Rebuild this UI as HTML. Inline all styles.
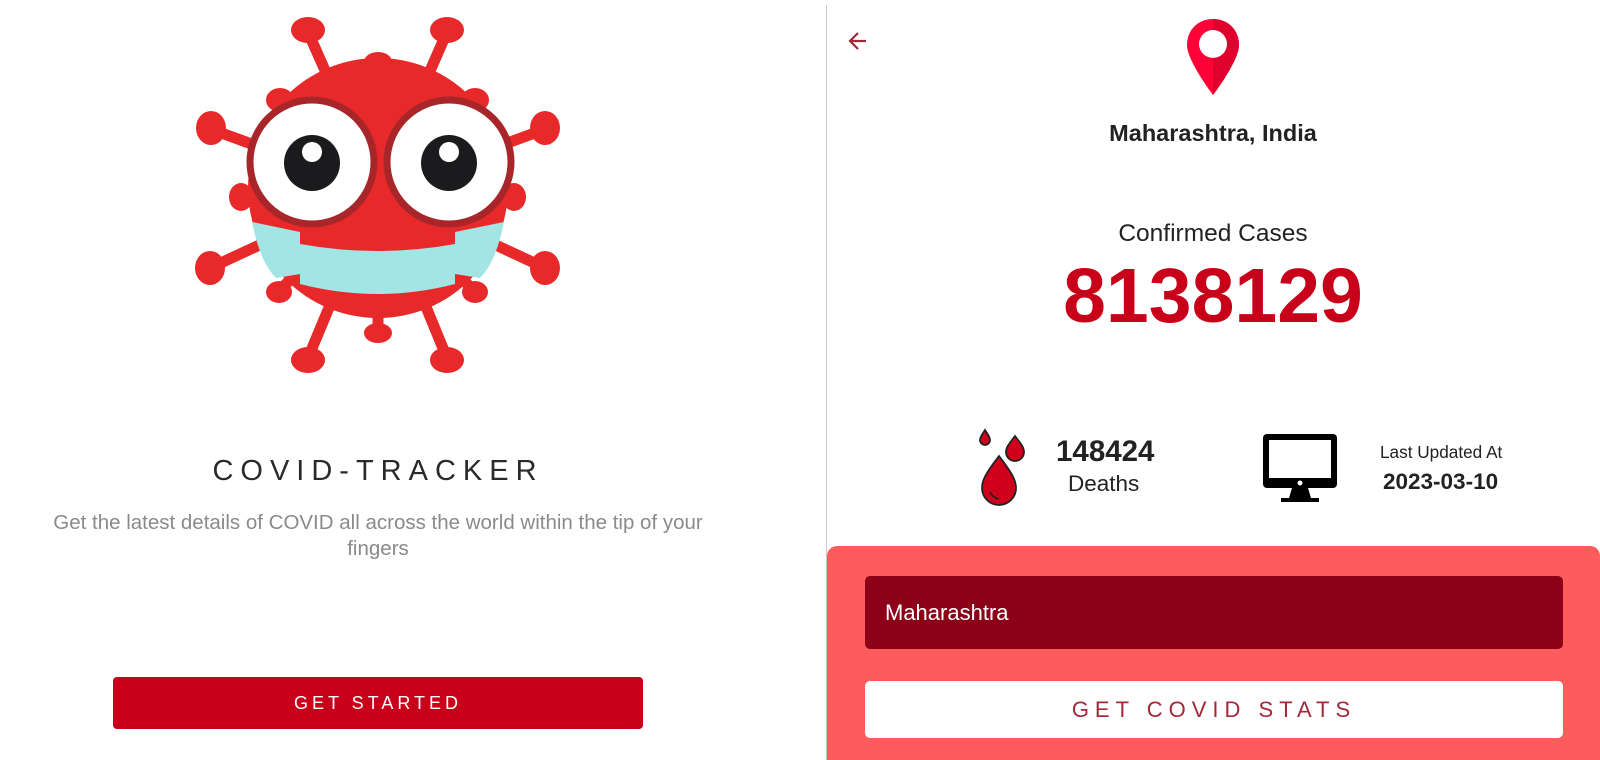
<!DOCTYPE html>
<html><head><meta charset="utf-8"><style>
*{margin:0;padding:0;box-sizing:border-box}
body{width:1600px;height:760px;background:#fff;position:relative;overflow:hidden;font-family:"Liberation Sans",sans-serif}
.a{position:absolute}
.c{text-align:center}
</style></head><body>
<svg class="a" style="left:0;top:0" width="800" height="420" viewBox="0 0 800 420">
<g stroke="#e8292a" stroke-width="11" stroke-linecap="round">
<line x1="378" y1="190" x2="308" y2="32"/><line x1="378" y1="190" x2="447" y2="32"/>
<line x1="378" y1="190" x2="378" y2="62"/><line x1="378" y1="190" x2="213" y2="130"/>
<line x1="378" y1="190" x2="543" y2="130"/><line x1="378" y1="190" x2="243" y2="197"/>
<line x1="378" y1="190" x2="512" y2="197"/><line x1="378" y1="190" x2="212" y2="267"/>
<line x1="378" y1="190" x2="543" y2="267"/><line x1="378" y1="190" x2="280" y2="290"/>
<line x1="378" y1="190" x2="473" y2="290"/><line x1="378" y1="190" x2="308" y2="358"/>
<line x1="378" y1="190" x2="447" y2="358"/><line x1="378" y1="190" x2="378" y2="330"/>
<line x1="378" y1="190" x2="280" y2="102"/><line x1="378" y1="190" x2="473" y2="102"/>
</g>
<g fill="#e8292a">
<ellipse cx="308" cy="30" rx="17" ry="13"/><ellipse cx="447" cy="30" rx="17" ry="13"/>
<ellipse cx="378" cy="62" rx="14" ry="10"/><ellipse cx="211" cy="128" rx="15" ry="17"/>
<ellipse cx="545" cy="128" rx="15" ry="17"/><ellipse cx="241" cy="197" rx="12" ry="14"/>
<ellipse cx="514" cy="197" rx="12" ry="14"/><ellipse cx="210" cy="268" rx="15" ry="17"/>
<ellipse cx="545" cy="268" rx="15" ry="17"/><ellipse cx="279" cy="292" rx="13" ry="11"/>
<ellipse cx="475" cy="292" rx="13" ry="11"/><ellipse cx="308" cy="360" rx="17" ry="13"/>
<ellipse cx="447" cy="360" rx="17" ry="13"/><ellipse cx="378" cy="333" rx="14" ry="10"/>
<ellipse cx="280" cy="100" rx="14" ry="12"/><ellipse cx="475" cy="100" rx="14" ry="12"/>
<circle cx="378" cy="188" r="130"/>
</g>
<path d="M252 222 L300 232 L300 244 Q378 258 455 244 L455 232 L504 222 Q496 262 480 278 L455 274 L455 284 Q378 304 300 284 L300 274 L276 278 Q260 262 252 222Z" fill="#a3e4e4"/>
<circle cx="312" cy="162" r="62" fill="#fff" stroke="#a8262a" stroke-width="7"/>
<circle cx="449" cy="162" r="62" fill="#fff" stroke="#a8262a" stroke-width="7"/>
<circle cx="312" cy="163" r="28" fill="#1b1a1c"/><circle cx="449" cy="163" r="28" fill="#1b1a1c"/>
<circle cx="312" cy="152" r="10" fill="#fff"/><circle cx="449" cy="152" r="10" fill="#fff"/>
</svg>
<div class="a c" style="left:0;width:756px;top:455px;font-size:29px;letter-spacing:7px;color:#2a2a2a">COVID-TRACKER</div>
<div class="a c" style="left:33px;width:690px;top:510px;font-size:20.5px;line-height:26px;color:#8a8a8a">Get the latest details of COVID all across the world within the tip of your fingers</div>
<div class="a c" style="left:113px;top:677px;width:530px;height:52px;background:#c8001a;border-radius:4px;color:#fff;font-size:18px;letter-spacing:4px;line-height:52px">GET STARTED</div>

<div class="a" style="left:826px;top:5px;width:1px;height:755px;background:#c8c8c8"></div>
<svg class="a" style="left:847px;top:30px" width="22" height="22" viewBox="0 0 22 22"><path d="M19 11H4M11 3L3 11l8 8" fill="none" stroke="#a3283a" stroke-width="2.2"/></svg>
<svg class="a" style="left:1185px;top:17px" width="56" height="80" viewBox="0 0 56 80"><path d="M28 2C13 2 2 13 2 28c0 16 26 50 26 50s26-34 26-50C54 13 43 2 28 2z" fill="#ff0038"/><path d="M28 2c15 0 26 11 26 26 0 16-26 50-26 50z" fill="#e0002d"/><circle cx="28" cy="27" r="14" fill="#fff"/></svg>
<div class="a c" style="left:826px;width:774px;top:120px;font-size:23.5px;font-weight:bold;color:#222">Maharashtra, India</div>
<div class="a c" style="left:826px;width:774px;top:220px;font-size:24.5px;color:#222">Confirmed Cases</div>
<div class="a c" style="left:826px;width:774px;top:252px;font-size:77px;font-weight:bold;color:#c8001a;line-height:88px">8138129</div>
<svg class="a" style="left:977px;top:428px" width="55" height="78" viewBox="0 0 55 78"><g fill="#d0001c" stroke="#222" stroke-width="1.8"><path d="M8 2c-4 6-5 8-5 10a5 5 0 0 0 10 0c0-2-1-4-5-10z"/><path d="M38 8c-7 9-9 12-9 16a9 9 0 0 0 18 0c0-4-2-7-9-16z"/><path d="M22 28C9 45 5 52 5 60a17 17 0 0 0 34 0c0-8-4-15-17-32z"/></g><path d="M13 64q3 6 9 7" fill="none" stroke="#222" stroke-width="1.8"/></svg>
<div class="a" style="left:1056px;top:435px;font-size:29.5px;font-weight:bold;color:#222">148424</div>
<div class="a" style="left:1068px;top:471px;font-size:22.5px;color:#222">Deaths</div>
<svg class="a" style="left:1261px;top:432px" width="78" height="72" viewBox="0 0 78 72"><rect x="2" y="2" width="74" height="54" rx="4" fill="#000"/><rect x="8" y="8" width="62" height="38" fill="#fff"/><circle cx="39" cy="51" r="2.5" fill="#fff"/><path d="M31 56h16l3 10h8v4H20v-4h8z" fill="#000"/></svg>
<div class="a" style="left:1380px;top:442px;font-size:17.2px;color:#222">Last Updated At</div>
<div class="a" style="left:1383px;top:469px;font-size:22.5px;font-weight:bold;color:#222">2023-03-10</div>
<div class="a" style="left:827px;top:546px;width:773px;height:214px;background:#fe5c5c;border-radius:10px 10px 0 0"></div>
<div class="a" style="left:865px;top:576px;width:698px;height:73px;background:#8c0018;border-radius:5px;color:#fff;font-size:22px;line-height:73px;padding-left:20px">Maharashtra</div>
<div class="a c" style="left:865px;top:681px;width:698px;height:57px;background:#fff;border-radius:5px;color:#a3283a;font-size:22px;letter-spacing:6px;line-height:57px">GET COVID STATS</div>
</body></html>
